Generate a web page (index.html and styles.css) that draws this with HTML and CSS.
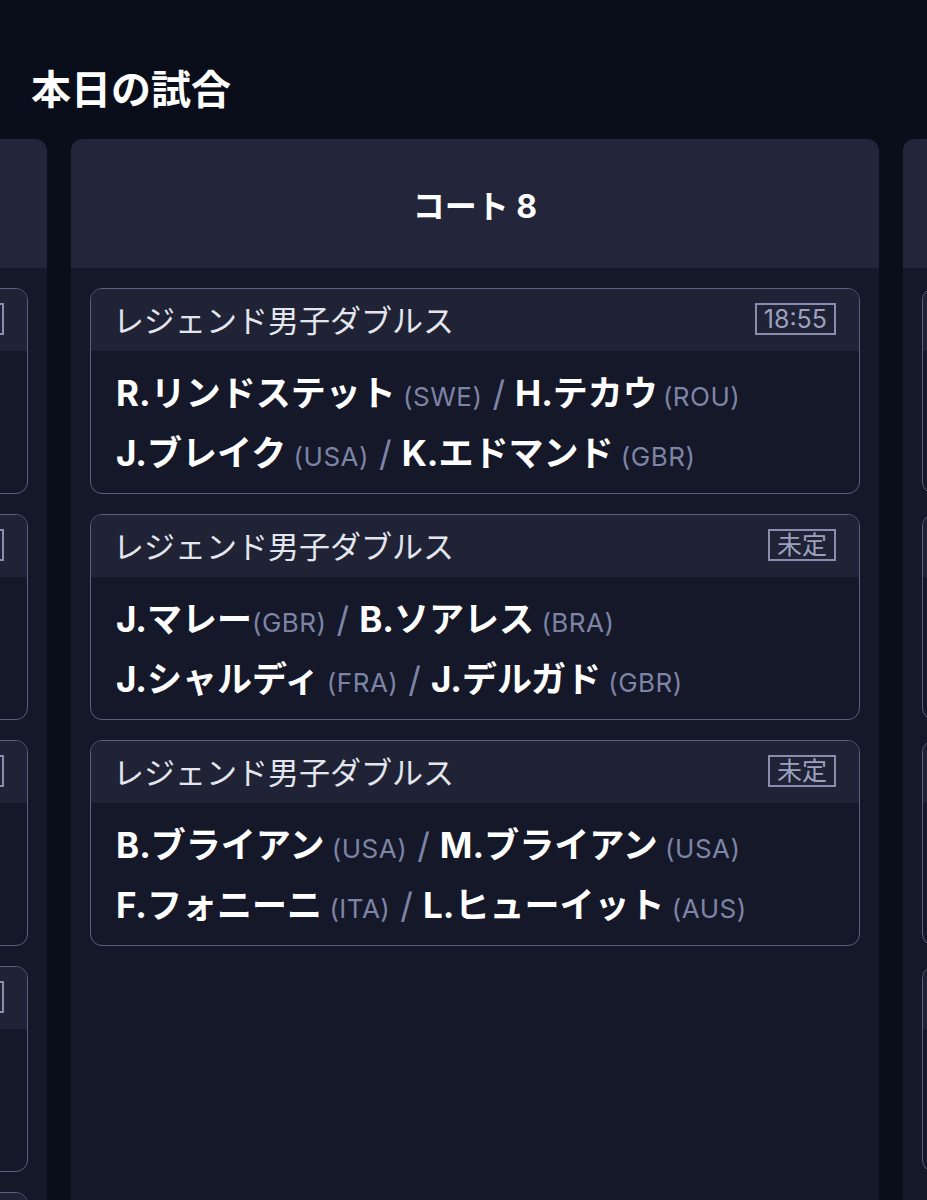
FILE: index.html
```html
<!DOCTYPE html>
<html lang="ja">
<head>
<meta charset="utf-8">
<title>本日の試合</title>
<link rel="stylesheet" href="styles.css">
</head>
<body>
<main class="page">
  <h1 class="title">本日の試合</h1>
  <div class="courts">
    <div class="track">
      <section class="court">
        <header class="court-head">コート 7</header>
        <div class="court-body">
          <article class="match">
            <div class="match-head"><span class="event">レジェンド女子ダブルス</span><span class="badge">17:30</span></div>
            <div class="match-body">
              <div class="pair"><span class="pl">A.プレーヤー</span> <span class="cc">(USA)</span><span class="sep">/</span><span class="pl">B.プレーヤー</span> <span class="cc">(GBR)</span></div>
              <div class="pair"><span class="pl">C.プレーヤー</span> <span class="cc">(FRA)</span><span class="sep">/</span><span class="pl">D.プレーヤー</span> <span class="cc">(ESP)</span></div>
            </div>
          </article>
          <article class="match">
            <div class="match-head"><span class="event">レジェンド女子ダブルス</span><span class="badge">未定</span></div>
            <div class="match-body">
              <div class="pair"><span class="pl">E.プレーヤー</span> <span class="cc">(AUS)</span><span class="sep">/</span><span class="pl">F.プレーヤー</span> <span class="cc">(USA)</span></div>
              <div class="pair"><span class="pl">G.プレーヤー</span> <span class="cc">(CZE)</span><span class="sep">/</span><span class="pl">H.プレーヤー</span> <span class="cc">(GER)</span></div>
            </div>
          </article>
          <article class="match">
            <div class="match-head"><span class="event">レジェンド女子ダブルス</span><span class="badge">未定</span></div>
            <div class="match-body">
              <div class="pair"><span class="pl">I.プレーヤー</span> <span class="cc">(ITA)</span><span class="sep">/</span><span class="pl">J.プレーヤー</span> <span class="cc">(SUI)</span></div>
              <div class="pair"><span class="pl">K.プレーヤー</span> <span class="cc">(NED)</span><span class="sep">/</span><span class="pl">L.プレーヤー</span> <span class="cc">(BEL)</span></div>
            </div>
          </article>
          <article class="match">
            <div class="match-head"><span class="event">レジェンド女子ダブルス</span><span class="badge">未定</span></div>
            <div class="match-body">
              <div class="pair"><span class="pl">M.プレーヤー</span> <span class="cc">(USA)</span><span class="sep">/</span><span class="pl">N.プレーヤー</span> <span class="cc">(RUS)</span></div>
              <div class="pair"><span class="pl">O.プレーヤー</span> <span class="cc">(JPN)</span><span class="sep">/</span><span class="pl">P.プレーヤー</span> <span class="cc">(CRO)</span></div>
            </div>
          </article>
          <article class="match">
            <div class="match-head"><span class="event">レジェンド女子ダブルス</span><span class="badge">未定</span></div>
            <div class="match-body">
              <div class="pair"><span class="pl">Q.プレーヤー</span> <span class="cc">(USA)</span><span class="sep">/</span><span class="pl">R.プレーヤー</span> <span class="cc">(GBR)</span></div>
              <div class="pair"><span class="pl">S.プレーヤー</span> <span class="cc">(FRA)</span><span class="sep">/</span><span class="pl">T.プレーヤー</span> <span class="cc">(ESP)</span></div>
            </div>
          </article>
        </div>
      </section>

      <section class="court">
        <header class="court-head">コート 8</header>
        <div class="court-body">
          <article class="match">
            <div class="match-head"><span class="event">レジェンド男子ダブルス</span><span class="badge">18:55</span></div>
            <div class="match-body">
              <div class="pair"><span class="pl">R.リンドステット</span> <span class="cc">(SWE)</span><span class="sep">/</span><span class="pl">H.テカウ</span><span class="cc cc-tight">(ROU)</span></div>
              <div class="pair"><span class="pl">J.ブレイク</span> <span class="cc">(USA)</span><span class="sep">/</span><span class="pl">K.エドマンド</span> <span class="cc">(GBR)</span></div>
            </div>
          </article>
          <article class="match">
            <div class="match-head"><span class="event">レジェンド男子ダブルス</span><span class="badge">未定</span></div>
            <div class="match-body">
              <div class="pair"><span class="pl">J.マレー</span><span class="cc">(GBR)</span><span class="sep">/</span><span class="pl">B.ソアレス</span> <span class="cc">(BRA)</span></div>
              <div class="pair"><span class="pl">J.シャルディ</span> <span class="cc">(FRA)</span><span class="sep">/</span><span class="pl">J.デルガド</span> <span class="cc">(GBR)</span></div>
            </div>
          </article>
          <article class="match">
            <div class="match-head"><span class="event">レジェンド男子ダブルス</span><span class="badge">未定</span></div>
            <div class="match-body">
              <div class="pair"><span class="pl">B.ブライアン</span> <span class="cc">(USA)</span><span class="sep">/</span><span class="pl">M.ブライアン</span> <span class="cc">(USA)</span></div>
              <div class="pair"><span class="pl">F.フォニーニ</span> <span class="cc">(ITA)</span><span class="sep">/</span><span class="pl">L.ヒューイット</span> <span class="cc">(AUS)</span></div>
            </div>
          </article>
        </div>
      </section>

      <section class="court">
        <header class="court-head">コート 9</header>
        <div class="court-body">
          <article class="match">
            <div class="match-head"><span class="event">男子シングルス</span><span class="badge">未定</span></div>
            <div class="match-body">
              <div class="pair"><span class="pl">A.プレーヤー</span> <span class="cc">(USA)</span></div>
              <div class="pair"><span class="pl">B.プレーヤー</span> <span class="cc">(GBR)</span></div>
            </div>
          </article>
          <article class="match">
            <div class="match-head"><span class="event">男子シングルス</span><span class="badge">未定</span></div>
            <div class="match-body">
              <div class="pair"><span class="pl">C.プレーヤー</span> <span class="cc">(FRA)</span></div>
              <div class="pair"><span class="pl">D.プレーヤー</span> <span class="cc">(ESP)</span></div>
            </div>
          </article>
          <article class="match">
            <div class="match-head"><span class="event">男子シングルス</span><span class="badge">未定</span></div>
            <div class="match-body">
              <div class="pair"><span class="pl">E.プレーヤー</span> <span class="cc">(AUS)</span></div>
              <div class="pair"><span class="pl">F.プレーヤー</span> <span class="cc">(USA)</span></div>
            </div>
          </article>
          <article class="match">
            <div class="match-head"><span class="event">男子シングルス</span><span class="badge">未定</span></div>
            <div class="match-body">
              <div class="pair"><span class="pl">G.プレーヤー</span> <span class="cc">(CZE)</span></div>
              <div class="pair"><span class="pl">H.プレーヤー</span> <span class="cc">(GER)</span></div>
            </div>
          </article>
        </div>
      </section>
    </div>
  </div>
</main>
</body>
</html>
```

FILE: styles.css
```css
html, body {
  margin: 0;
  padding: 0;
  background: #0a0d1a;
}

body {
  font-family: Inter, "Noto Sans CJK JP", sans-serif;
  color: #ffffff;
  height: 1200px;
  overflow: hidden;
}

.page {
  display: flex;
  flex-direction: column;
  height: 1200px;
}

.title {
  margin: 66px 0 25px 31px;
  font-size: 40px;
  line-height: 48px;
  font-weight: 700;
  color: #ffffff;
}

.courts {
  flex: 1;
  overflow: hidden;
}

.track {
  display: flex;
  gap: 24px;
  margin-left: -761px;
  height: 100%;
}

.court {
  flex: 0 0 808px;
  display: flex;
  flex-direction: column;
  background: #141828;
  border-radius: 12px 12px 0 0;
  overflow: hidden;
}

.court-head {
  height: 129px;
  flex: 0 0 129px;
  display: flex;
  align-items: center;
  justify-content: center;
  background: #23263a;
  font-size: 32px;
  font-weight: 700;
  color: #ffffff;
}

.court-body {
  display: flex;
  flex-direction: column;
  gap: 20px;
  padding: 20px 19px;
}

.match {
  border: 1px solid #5a6080;
  border-radius: 12px;
  overflow: hidden;
  background: #141829;
}

.match-head {
  height: 62px;
  display: flex;
  align-items: center;
  justify-content: space-between;
  padding: 0 23px 0 22px;
  background: #1f2335;
}

.event {
  font-size: 31px;
  font-weight: 400;
  color: #e4e6ee;
  font-family: "Noto Sans CJK JP", sans-serif;
  margin-top: -3px;
}

.badge {
  display: inline-block;
  height: 28px;
  border: 2px solid #8a8eae;
  padding: 0 7px;
  font-size: 25px;
  line-height: 28px;
  color: #9da1bf;
  margin-top: -2px;
}

.match-body {
  padding: 12px 25px 10px;
}

.pair {
  height: 60px;
  line-height: 60px;
  white-space: nowrap;
  font-size: 26px;
}

.pl {
  font-size: 35px;
  font-weight: 700;
  color: #ffffff;
}

.cc {
  font-size: 26px;
  font-weight: 400;
  color: #7e84a5;
  letter-spacing: 0.5px;
}

.cc-tight {
  margin-left: 5px;
}

.sep {
  font-size: 35px;
  font-weight: 400;
  color: #7e84a5;
  margin: 0 10px;
}
```
